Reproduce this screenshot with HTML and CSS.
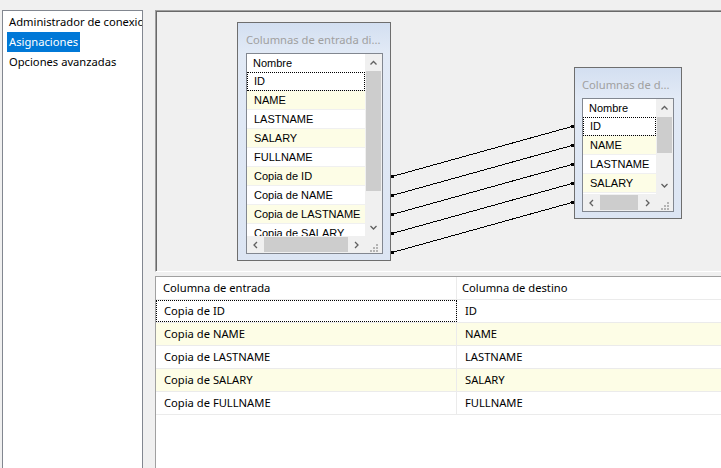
FILE: index.html
```html
<!DOCTYPE html>
<html lang="es">
<head>
    <meta charset="UTF-8">
    <title>Asignaciones</title>
    <link rel="stylesheet" href="styles.css">
</head>
<body>
    <div class="window">
        <ul class="nav">
            <li><span>Administrador de conexiones</span></li>
            <li class="sel"><span>Asignaciones</span></li>
            <li><span>Opciones avanzadas</span></li>
        </ul>

        <div class="main">
            <div class="canvas">
                <svg class="links" width="560" height="250">
                    <g stroke="#000" stroke-width="1" shape-rendering="crispEdges">
                        <line x1="236" y1="165.5" x2="416" y2="115.5"/>
                        <line x1="236" y1="184.5" x2="416" y2="134.5"/>
                        <line x1="236" y1="203.5" x2="416" y2="153.5"/>
                        <line x1="236" y1="222.5" x2="416" y2="172.5"/>
                        <line x1="236" y1="241.5" x2="416" y2="191.5"/>
                    </g>
                    <g fill="#000">
                        <rect x="235" y="164" width="3" height="3"/>
                        <rect x="235" y="183" width="3" height="3"/>
                        <rect x="235" y="202" width="3" height="3"/>
                        <rect x="235" y="221" width="3" height="3"/>
                        <rect x="235" y="240" width="3" height="3"/>
                        <rect x="415" y="114" width="3" height="3"/>
                        <rect x="415" y="133" width="3" height="3"/>
                        <rect x="415" y="152" width="3" height="3"/>
                        <rect x="415" y="171" width="3" height="3"/>
                        <rect x="415" y="190" width="3" height="3"/>
                    </g>
                </svg>

                <!-- columnas de entrada -->
                <div class="node node-in">
                    <div class="node-title">Columnas de entrada di...</div>
                    <div class="grid">
                        <div class="rows">
                            <div class="head">Nombre</div>
                            <div class="row focus">ID</div>
                            <div class="row alt">NAME</div>
                            <div class="row">LASTNAME</div>
                            <div class="row alt">SALARY</div>
                            <div class="row">FULLNAME</div>
                            <div class="row alt">Copia de ID</div>
                            <div class="row">Copia de NAME</div>
                            <div class="row alt">Copia de LASTNAME</div>
                            <div class="row">Copia de SALARY</div>
                        </div>
                        <div class="vscroll">
                            <div class="arrow"><svg width="17" height="17"><path d="M5.5 10.5 L8.5 7.5 L11.5 10.5" fill="none" stroke="#606060" stroke-width="1.3"/></svg></div>
                            <div class="track"><div class="thumb thumb-in"></div></div>
                            <div class="arrow"><svg width="17" height="17"><path d="M5.5 7 L8.5 10 L11.5 7" fill="none" stroke="#606060" stroke-width="1.3"/></svg></div>
                        </div>
                        <div class="hscroll">
                            <div class="arrow"><svg width="17" height="17"><path d="M10 6 L7 9 L10 12" fill="none" stroke="#606060" stroke-width="1.3"/></svg></div>
                            <div class="track"><div class="thumb hthumb-in"></div></div>
                            <div class="arrow"><svg width="17" height="17"><path d="M7 6 L10 9 L7 12" fill="none" stroke="#606060" stroke-width="1.3"/></svg></div>
                        </div>
                        <div class="grip"><svg width="17" height="17" fill="#b4b4b4"><rect x="11" y="8" width="2" height="2"/><rect x="8" y="11" width="2" height="2"/><rect x="11" y="11" width="2" height="2"/><rect x="5" y="14" width="2" height="2"/><rect x="8" y="14" width="2" height="2"/><rect x="11" y="14" width="2" height="2"/></svg></div>
                    </div>
                </div>

                <!-- columnas de destino -->
                <div class="node node-out">
                    <div class="node-title">Columnas de d...</div>
                    <div class="grid">
                        <div class="rows">
                            <div class="head">Nombre</div>
                            <div class="row focus">ID</div>
                            <div class="row alt">NAME</div>
                            <div class="row">LASTNAME</div>
                            <div class="row alt">SALARY</div>
                        </div>
                        <div class="vscroll">
                            <div class="arrow"><svg width="17" height="17"><path d="M5.5 10.5 L8.5 7.5 L11.5 10.5" fill="none" stroke="#606060" stroke-width="1.3"/></svg></div>
                            <div class="track"><div class="thumb thumb-out"></div></div>
                            <div class="arrow"><svg width="17" height="17"><path d="M5.5 7 L8.5 10 L11.5 7" fill="none" stroke="#606060" stroke-width="1.3"/></svg></div>
                        </div>
                        <div class="hscroll">
                            <div class="arrow"><svg width="17" height="17"><path d="M10 6 L7 9 L10 12" fill="none" stroke="#606060" stroke-width="1.3"/></svg></div>
                            <div class="track"><div class="thumb hthumb-out"></div></div>
                            <div class="arrow"><svg width="17" height="17"><path d="M7 6 L10 9 L7 12" fill="none" stroke="#606060" stroke-width="1.3"/></svg></div>
                        </div>
                        <div class="grip"><svg width="17" height="17" fill="#b4b4b4"><rect x="11" y="8" width="2" height="2"/><rect x="8" y="11" width="2" height="2"/><rect x="11" y="11" width="2" height="2"/><rect x="5" y="14" width="2" height="2"/><rect x="8" y="14" width="2" height="2"/><rect x="11" y="14" width="2" height="2"/></svg></div>
                    </div>
                </div>
            </div>

            <div class="table">
                <div class="trow thead">
                    <div>Columna de entrada</div>
                    <div>Columna de destino</div>
                </div>
                <div class="trow">
                    <div class="focus">Copia de ID</div>
                    <div>ID</div>
                </div>
                <div class="trow alt">
                    <div>Copia de NAME</div>
                    <div>NAME</div>
                </div>
                <div class="trow">
                    <div>Copia de LASTNAME</div>
                    <div>LASTNAME</div>
                </div>
                <div class="trow alt">
                    <div>Copia de SALARY</div>
                    <div>SALARY</div>
                </div>
                <div class="trow">
                    <div>Copia de FULLNAME</div>
                    <div>FULLNAME</div>
                </div>
            </div>
        </div>
    </div>
</body>
</html>
```
FILE: styles.css
```css
* {
    box-sizing: border-box;
}
body {
    margin: 0;
    width: 721px;
    height: 468px;
    overflow: hidden;
    background-color: #f0f0f0;
    font-family: "Noto Sans", sans-serif;
    font-size: 11.2px;
    color: #000;
}
.window {
    display: flex;
    height: 468px;
    padding-top: 10px;
}

/* lista de la izquierda */
.nav {
    flex-shrink: 0;
    width: 141px;
    height: 480px;
    margin: 0 12px 0 2px;
    padding: 1px 0 0 4px;
    list-style: none;
    background-color: white;
    border: 1px solid #828790;
    overflow: hidden;
    white-space: nowrap;
}
.nav li {
    height: 20px;
    line-height: 20px;
}
.nav span {
    display: inline-block;
    padding: 0 2px;
}
.nav .sel span {
    background-color: #0078d7;
    color: white;
}

.main {
    flex-shrink: 0;
    width: 580px;
    display: flex;
    flex-direction: column;
    gap: 4px;
}

/* lienzo con las cajas */
.canvas {
    position: relative;
    height: 262px;
    border-top: 1px solid #a0a0a0;
    border-left: 1px solid #a0a0a0;
    border-bottom: 1px solid white;
    box-shadow: inset 1px 1px #696969;
}
.links {
    position: absolute;
    left: 0;
    top: 0;
}
.node {
    position: absolute;
    border: 1px solid #6e6e6e;
    background: linear-gradient(#d3dff1, #e2eaf6 30px, #dce5f3);
}
.node-in {
    left: 81px;
    top: 11px;
    width: 154px;
    height: 239px;
    padding-left: 8px;
}
.node-out {
    left: 418px;
    top: 56px;
    width: 108px;
    height: 152px;
    padding-left: 7px;
}
.node-title {
    height: 30px;
    padding-top: 9px;
    line-height: 16px;
    color: #a0a0a0;
    white-space: nowrap;
    overflow: hidden;
}
.grid {
    display: grid;
    grid-template-columns: 1fr 17px;
    grid-template-rows: 1fr 17px;
    background-color: white;
    border: 1px solid #828790;
}
.node-in .grid {
    width: 137px;
    height: 201px;
}
.node-out .grid {
    width: 92px;
    height: 114px;
}
.rows {
    overflow: hidden;
    font-family: "Liberation Sans", Arial, sans-serif;
    font-size: 11px;
}
.head {
    height: 18px;
    line-height: 18px;
    padding-left: 6px;
}
.row {
    height: 19px;
    line-height: 18px;
    padding-left: 7px;
    border-bottom: 1px solid #f0f0f0;
    white-space: nowrap;
}
.alt {
    background-color: #fdfde6;
}
.focus {
    outline: 1px dotted #000;
    outline-offset: -1px;
}

/* barras de desplazamiento */
.vscroll {
    display: flex;
    flex-direction: column;
    background-color: #f0f0f0;
}
.hscroll {
    display: flex;
    background-color: #f0f0f0;
}
.arrow {
    width: 17px;
    height: 17px;
    flex-shrink: 0;
}
.arrow svg, .grip svg {
    display: block;
}
.track {
    flex: 1;
}
.thumb {
    background-color: #cdcdcd;
}
.thumb-in {
    height: 120px;
    margin: 0 1px;
}
.thumb-out {
    height: 36px;
    margin: 1px 1px 0;
}
.hthumb-in {
    width: 84px;
    height: 15px;
    margin-top: 1px;
}
.hthumb-out {
    width: 38px;
    height: 15px;
    margin-top: 1px;
}
.grip {
    background-color: #f0f0f0;
}

/* tabla de asignaciones */
.table {
    flex: 1;
    background-color: white;
    border-top: 1px solid #a0a0a0;
    border-left: 1px solid #a0a0a0;
}
.trow {
    display: grid;
    grid-template-columns: 301px 1fr;
    height: 23px;
    border-bottom: 1px solid #ebebeb;
}
.trow div {
    line-height: 22px;
    padding-left: 8px;
    white-space: nowrap;
}
.trow div:first-child {
    border-right: 1px solid #ebebeb;
}
.thead div:first-child {
    padding-left: 7px;
}
.thead div:last-child {
    padding-left: 5px;
}
```
